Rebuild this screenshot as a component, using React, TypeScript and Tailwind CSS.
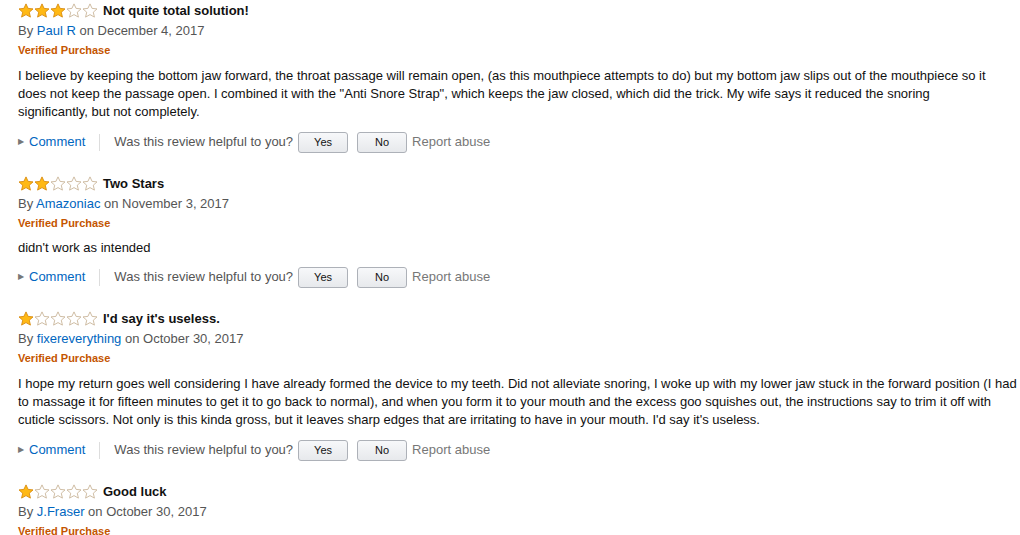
import React from "react";

const Star = ({ filled }: { filled: boolean }) => (
  <svg width="16" height="16" viewBox="0 0 16 16" className="block">
    <path
      d="M8 0.9 L10.1 5.4 L15 5.9 L11.3 9.2 L12.4 14.1 L8 11.6 L3.6 14.1 L4.7 9.2 L1 5.9 L5.9 5.4 Z"
      fill={filled ? "#ffb915" : "#ffffff"}
      stroke={filled ? "#d88a0c" : "#c9b69a"}
      strokeWidth="0.9"
      strokeLinejoin="round"
    />
  </svg>
);

const Stars = ({ n }: { n: number }) => (
  <div className="flex">
    {[0, 1, 2, 3, 4].map((i) => (
      <Star key={i} filled={i < n} />
    ))}
  </div>
);

const Btn = ({ label }: { label: string }) => (
  <button className="w-[50px] h-[21px] rounded-[3px] border border-[#adb1b8] bg-gradient-to-b from-[#f7f8fa] to-[#e7e9ec] text-[11px] text-[#111] leading-none">
    {label}
  </button>
);

type R = {
  stars: number;
  title: string;
  author: string;
  date: string;
  body?: string[];
  actions?: boolean;
  tight?: boolean;
};

const reviews: R[] = [
  {
    stars: 3,
    title: "Not quite total solution!",
    author: "Paul R",
    date: "December 4, 2017",
    body: [
      "I believe by keeping the bottom jaw forward, the throat passage will remain open, (as this mouthpiece attempts to do) but my bottom jaw slips out of the mouthpiece so it",
      'does not keep the passage open. I combined it with the "Anti Snore Strap", which keeps the jaw closed, which did the trick. My wife says it reduced the snoring',
      "significantly, but not completely.",
    ],
    actions: true,
  },
  {
    stars: 2,
    title: "Two Stars",
    author: "Amazoniac",
    date: "November 3, 2017",
    body: ["didn't work as intended"],
    actions: true,
    tight: true,
  },
  {
    stars: 1,
    title: "I'd say it's useless.",
    author: "fixereverything",
    date: "October 30, 2017",
    body: [
      "I hope my return goes well considering I have already formed the device to my teeth. Did not alleviate snoring, I woke up with my lower jaw stuck in the forward position (I had",
      "to massage it for fifteen minutes to get it to go back to normal), and when you form it to your mouth and the excess goo squishes out, the instructions say to trim it off with",
      "cuticle scissors. Not only is this kinda gross, but it leaves sharp edges that are irritating to have in your mouth. I'd say it's useless.",
    ],
    actions: true,
  },
  {
    stars: 1,
    title: "Good luck",
    author: "J.Fraser",
    date: "October 30, 2017",
  },
];

export default function App() {
  return (
    <div
      className="w-[1020px] h-[535px] overflow-hidden bg-white pl-[18px] pt-[1px] text-[13px] text-[#111]"
      style={{ fontFamily: '"Liberation Sans", Arial, sans-serif' }}
    >
      {reviews.map((r, idx) => (
        <div key={idx} className="flex flex-col">
          <div className="flex items-center h-[20px] gap-[5px]">
            <Stars n={r.stars} />
            <span className="font-bold text-[13px] text-[#111]">{r.title}</span>
          </div>
          <div className="h-[20px] leading-[20px] text-[#555]">
            By <span className="text-[#0066c0]">{r.author}</span> on {r.date}
          </div>
          <div className="h-[20px] leading-[18px] text-[11px] font-bold text-[#c45500]">
            Verified Purchase
          </div>
          {r.body && (
            <div
              className={
                r.tight
                  ? "mt-[5px] leading-[18px] text-[#111]"
                  : "mt-[6px] leading-[18px] text-[#111]"
              }
            >
              {r.body.map((line, i) => (
                <div key={i} className="whitespace-nowrap">
                  {line}
                </div>
              ))}
            </div>
          )}
          {r.actions && (
            <div
              className={
                r.tight
                  ? "flex items-center h-[22px] mt-[9px] mb-[21px]"
                  : "flex items-center h-[22px] mt-[10px] mb-[21px]"
              }
            >
              <span className="text-[#777] text-[8px] w-[11px]">▶</span>
              <span className="text-[#0066c0]">Comment</span>
              <span className="w-px h-[17px] bg-[#ddd] ml-[14px] mr-[14px]" />
              <span className="text-[#555] mr-[5px]">Was this review helpful to you?</span>
              <Btn label="Yes" />
              <span className="w-[9px]" />
              <Btn label="No" />
              <span className="text-[#777] ml-[5px]">Report abuse</span>
            </div>
          )}
        </div>
      ))}
    </div>
  );
}
